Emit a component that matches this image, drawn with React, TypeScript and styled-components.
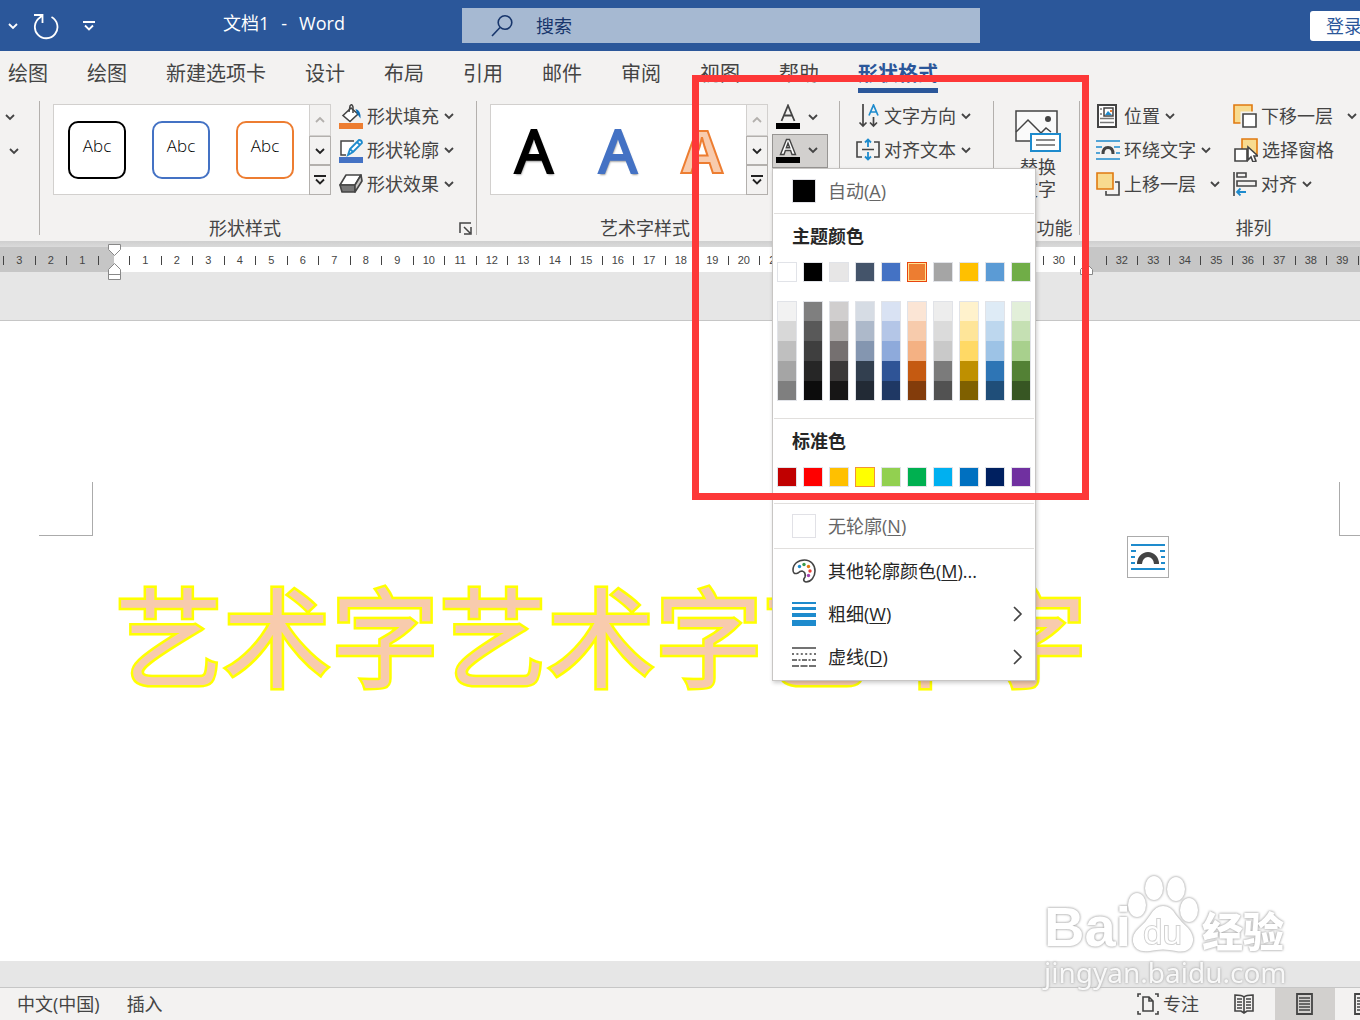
import React from 'react';
import styled, { createGlobalStyle } from 'styled-components';

const Global = createGlobalStyle`
  *, *::before, *::after { box-sizing: border-box; }
  body { margin: 0; background: #f3f2f1; overflow: hidden; }
  button, input { font: inherit; color: inherit; margin: 0; padding: 0; border: 0; background: none; }
  p, h2, ul { margin: 0; padding: 0; font: inherit; list-style: none; }
  svg { flex: none; }
`;

const Shell = styled.div`
  position: relative;
  display: flex;
  flex-direction: column;
  height: 100vh;
  overflow: hidden;
  color: #444;
  font: 18px/24px "Open Sans", "Noto Sans CJK SC", sans-serif;
  white-space: nowrap;
`;

/* ---------- title bar ---------- */
const TitleBar = styled.header`
  display: flex;
  align-items: center;
  flex: none;
  height: 51px;
  background: #2b579a;
  color: #fff;
  overflow: hidden;
`;
const QuickAccess = styled.div`
  display: flex;
  align-items: center;
  gap: 12px;
  flex: 0 0 223px;
  padding-left: 6px;
`;
const IconButton = styled.button<{ $w?: number }>`
  display: flex;
  align-items: center;
  justify-content: center;
  flex: none;
  width: ${(p) => p.$w ?? 14}px;
  height: 32px;
`;
const DocTitle = styled.p`
  display: flex;
  gap: 12px;
  flex: 0 0 239px;
  padding-bottom: 5px;
`;
const Search = styled.label`
  display: flex;
  align-items: center;
  flex: 0 1 518px;
  height: 35px;
  padding-left: 28px;
  gap: 22px;
  background: #a6b9d2;
  color: #17356b;
  input { flex: 1; min-width: 0; outline: 0; }
  input::placeholder { color: #17356b; opacity: 1; }
`;
const SignIn = styled.button`
  flex: none;
  width: 68px;
  height: 30px;
  margin: 0 -18px 0 auto;
  border-radius: 3px;
  background: #fff;
  color: #2b579a;
`;

/* ---------- tabs ---------- */
const Tabs = styled.nav`
  display: flex;
  flex: none;
  gap: 39px;
  height: 50px;
  padding: 6px 8px 0;
  font-size: 20px;
`;
const Tab = styled.button<{ $on?: boolean }>`
  height: 36px;
  padding-top: 2px;
  border-bottom: 5px solid ${(p) => (p.$on ? '#2b579a' : 'transparent')};
  color: ${(p) => (p.$on ? '#2b579a' : '#444')};
  font-weight: ${(p) => (p.$on ? 700 : 400)};
`;

/* ---------- ribbon ---------- */
const Ribbon = styled.div`
  display: flex;
  flex: none;
  height: 140px;
`;
const Group = styled.section<{ $w: number }>`
  display: flex;
  flex-direction: column;
  flex: 0 0 ${(p) => p.$w}px;
  height: 134px;
  border-right: 1px solid #b3b0ad;
`;
const GroupBody = styled.div<{ $pad?: number; $gap?: number }>`
  display: flex;
  align-items: flex-start;
  flex: 1;
  padding-left: ${(p) => p.$pad ?? 0}px;
  gap: ${(p) => p.$gap ?? 0}px;
`;
const GroupFoot = styled.div`
  display: flex;
  align-items: center;
  height: 14px;
  h2 { flex: 1; text-align: center; }
  h2:not(:last-child) { margin-right: 8px; }
  button { margin-right: 4px; }
`;
const Gallery = styled.div`
  display: flex;
  width: 278px;
  height: 91px;
  margin-top: 3px;
  border: 1px solid #d2d0ce;
  background: #fff;
`;
const GalleryItems = styled.div`
  display: grid;
  grid-template-columns: repeat(3, 84px);
  flex: 1;
  align-items: center;
  justify-content: start;
  justify-items: center;
  padding-left: 1px;
`;
const Swatch = styled.button<{ $c: string }>`
  width: 58px;
  height: 58px;
  padding-bottom: 8px;
  border: 2px solid ${(p) => p.$c};
  border-radius: 10px;
  background: #fff;
  color: #000;
  font-size: 17px;
  font-weight: 300;
`;
const ArtLetter = styled.button<{ $c: string; $edge?: string }>`
  color: ${(p) => p.$c};
  font: ${(p) => (p.$edge ? 700 : 400)} 60px/88px "Noto Sans", sans-serif;
  -webkit-text-stroke: 2px ${(p) => p.$edge ?? p.$c};
  text-shadow: ${(p) => (p.$edge ? 'none' : '1px 2px 2px #999')};
`;
const GalleryNav = styled.div`
  display: grid;
  grid-template-rows: 32px 29px 30px;
  width: 22px;
  margin: -1px -1px -1px 0;
`;
const NavButton = styled.button<{ $off?: boolean }>`
  display: flex;
  align-items: center;
  justify-content: center;
  border: 1px solid ${(p) => (p.$off ? '#d2d0ce' : '#b3b0ad')};
  background: #f3f2f1;
  color: ${(p) => (p.$off ? '#b3b0ad' : '#222')};
`;
const Column = styled.div<{ $w?: number; $gap?: number }>`
  display: flex;
  flex-direction: column;
  align-items: flex-start;
  gap: ${(p) => p.$gap ?? 0}px;
  width: ${(p) => (p.$w ? `${p.$w}px` : 'auto')};
`;
const Command = styled.button<{ $gap?: number }>`
  display: flex;
  align-items: center;
  gap: 4px;
  height: 34px;
  padding-bottom: 4px;
  svg:last-child { margin-left: ${(p) => p.$gap ?? 1}px; }
`;
const MenuAnchor = styled.div`
  position: relative;
`;
const ColorButton = styled.button<{ $open?: boolean }>`
  display: flex;
  align-items: center;
  gap: 8px;
  width: 56px;
  height: ${(p) => (p.$open ? 34 : 33)}px;
  padding: 0 0 2px 3px;
  border: 1px solid ${(p) => (p.$open ? '#979593' : 'transparent')};
  background: ${(p) => (p.$open ? '#d2d0ce' : 'none')};
`;
const BigCommand = styled.button`
  display: flex;
  flex-direction: column;
  align-items: center;
  gap: 4px;
  width: 85px;
  padding: 9px 0 0 3px;
  line-height: 22px;
  white-space: pre;
`;

/* ---------- drop-down ---------- */
const Menu = styled.div`
  position: absolute;
  z-index: 3;
  top: 100%;
  left: 0;
  width: 264px;
  padding-bottom: 2px;
  border: 1px solid #c8c6c4;
  background: #fff;
  box-shadow: 1px 2px 4px rgba(0, 0, 0, 0.2);
  color: #262626;
`;
const MenuItem = styled.button<{ $dim?: boolean }>`
  display: flex;
  align-items: center;
  width: 100%;
  height: ${(p) => (p.$dim ? 44 : 43)}px;
  padding: 0 12px 0 19px;
  gap: 12px;
  color: ${(p) => (p.$dim ? '#666' : '#262626')};
  span { flex: 1; text-align: left; }
  u { text-underline-offset: 2px; text-decoration-thickness: 1px; }
`;
const Rule = styled.div`
  height: 1px;
  margin: 0 1px;
  background: #e1dfdd;
`;
const Chip = styled.i<{ $c: string }>`
  width: 24px;
  height: 24px;
  border: 1px solid #e1e1e6;
  background: ${(p) => p.$c};
`;
const MenuHeading = styled.h2`
  padding: 10px 19px 12px;
  font-weight: 700;
`;
const ColorRow = styled.div<{ $bottom: number }>`
  display: grid;
  grid-template-columns: repeat(10, 20px);
  gap: 6px;
  padding: 2px 4px ${(p) => p.$bottom}px;
`;
const ColorCell = styled.button<{ $c: string; $edge?: string; $inner?: string }>`
  height: 20px;
  border: 1px solid ${(p) => p.$edge ?? '#e1e3e8'};
  background: ${(p) => p.$c};
  box-shadow: ${(p) => (p.$inner ? `inset 0 0 0 1px ${p.$inner}` : 'none')};
`;
const ShadeColumn = styled.div`
  display: flex;
  flex-direction: column;
  border: 1px solid #e1e3e8;
`;
const Shade = styled.button<{ $c: string }>`
  height: 20px;
  background: ${(p) => p.$c};
  &:first-child, &:last-child { height: 19px; }
`;

/* ---------- ruler and page ---------- */
const RulerStrip = styled.div`
  position: relative;
  flex: none;
  height: 79px;
  padding-top: 6px;
  background: linear-gradient(#cfcfcf, #dadada 6px, #e6e6e6 6px);
`;
const Ruler = styled.div`
  height: 25px;
  padding-left: 3px;
  overflow: hidden;
  background: linear-gradient(90deg, #c6c6c6 114px, #fff 114px 1086px, #c6c6c6 1086px);
`;
const RulerScale = styled.div`
  display: grid;
  grid-template-columns: repeat(44, 1fr);
  align-items: center;
  width: 1386px;
  height: 26px;
`;
const RulerCell = styled.span`
  height: 9px;
  border-left: 1px solid #444;
  font: 11px/9px "Liberation Sans", sans-serif;
  text-align: center;
`;
const IndentMarker = styled.svg<{ $x: number; $y: number }>`
  position: absolute;
  left: ${(p) => p.$x}px;
  top: ${(p) => p.$y}px;
`;
const Page = styled.main`
  position: relative;
  flex: 1;
  padding-top: 161px;
  border-top: 1px solid #c6c6c6;
  background: #fff;
  overflow: hidden;
`;
const Corners = styled.div`
  display: flex;
  justify-content: space-between;
  padding-left: 39px;
`;
const Corner = styled.i<{ $right?: boolean }>`
  width: ${(p) => (p.$right ? 21 : 54)}px;
  height: 54px;
  border: solid #ababab;
  border-width: ${(p) => (p.$right ? '0 0 1px 1px' : '0 1px 1px 0')};
`;
const WordArt = styled.p`
  padding: 24px 0 0 115px;
  color: #f8cbad;
  font: 400 108px/144px "Noto Sans CJK SC", sans-serif;
  -webkit-text-stroke: 5px #ff0;
  paint-order: stroke fill;
`;
const LayoutButton = styled.button`
  position: absolute;
  top: 215px;
  left: 1127px;
  display: grid;
  place-items: center;
  width: 42px;
  height: 42px;
  border: 1px solid #ababab;
  background: #fff;
`;
const Highlight = styled.div`
  position: absolute;
  z-index: 4;
  top: 75px;
  left: 692px;
  width: 397px;
  height: 425px;
  border: 7px solid #fd3838;
  pointer-events: none;
`;

/* ---------- watermark ---------- */
const Watermark = styled.div`
  position: absolute;
  z-index: 2;
  right: 72px;
  bottom: 31px;
  width: 244px;
  color: #fff;
  filter: drop-shadow(0 0 1px #aaa) drop-shadow(0 0 1px #ccc);
`;
const MarkRow = styled.div`
  display: flex;
  align-items: flex-end;
  height: 84px;
`;
const MarkLatin = styled.span`
  width: 84px;
  font: 700 56px/52px "Liberation Sans", sans-serif;
`;
const MarkPaw = styled.span`
  position: relative;
  width: 74px;
  height: 80px;
  svg { display: block; }
  b {
    position: absolute;
    left: 15px;
    top: 42px;
    font: 400 32px/34px "Open Sans", sans-serif;
    -webkit-text-stroke: 2px #d2d2d2;
    paint-order: stroke fill;
  }
`;
const MarkHan = styled.span`
  font: 900 41px/48px "Noto Sans CJK SC", sans-serif;
`;
const MarkUrl = styled.div`
  margin-top: 2px;
  color: rgba(255, 255, 255, 0.9);
  font: 28px/34px "Noto Sans", sans-serif;
`;

/* ---------- status bar ---------- */
const CanvasFoot = styled.div`
  flex: none;
  height: 27px;
  border-bottom: 1px solid #c6c6c6;
  background: #e6e6e6;
`;
const StatusBar = styled.footer`
  display: flex;
  align-items: center;
  flex: none;
  height: 32px;
  padding-left: 17px;
  overflow: hidden;
`;
const StatusText = styled.button`
  margin-right: 27px;
`;
const Focus = styled.button`
  display: flex;
  align-items: center;
  gap: 4px;
  margin: 0 14px 0 auto;
`;
const ViewButton = styled.button<{ $on?: boolean; $clip?: boolean }>`
  display: flex;
  align-items: center;
  justify-content: ${(p) => (p.$clip ? 'flex-start' : 'center')};
  flex: none;
  width: ${(p) => (p.$clip ? 25 : p.$on ? 60 : 62)}px;
  height: 32px;
  padding-left: ${(p) => (p.$clip ? 19 : 0)}px;
  background: ${(p) => (p.$on ? '#d2d0ce' : 'none')};
`;

/* ---------- icons ---------- */
const Chevron = ({ up }: { up?: boolean }) => (
  <svg width="10" height="8" viewBox="0 0 10 8" fill="none" stroke="currentColor" strokeWidth="1.8">
    <path d={up ? 'M1 6l4-4 4 4' : 'M1 2l4 4 4-4'} />
  </svg>
);
const MoreChevron = () => (
  <svg width="12" height="10" viewBox="0 0 12 10" fill="none" stroke="currentColor" strokeWidth="1.8">
    <path d="M0 1h12M2 4.500l4 4 4-4" />
  </svg>
);
const RedoIcon = () => (
  <svg width="26" height="28" viewBox="0 0 26 28" fill="none" stroke="#fff" strokeWidth="1.8">
    <path d="M18.500 5A11.300 11.300 0 1 1 7 5.500L9 3.500M1 3h8.500v8" />
  </svg>
);
const SearchIcon = () => (
  <svg width="24" height="24" viewBox="0 0 24 24" fill="none" stroke="#17356b" strokeWidth="1.600">
    <circle cx="15" cy="8.500" r="6.800" />
    <path d="M10 13.500L2 22" />
  </svg>
);
const FillIcon = () => (
  <svg width="24" height="25" viewBox="0 0 24 25" fill="none">
    <path d="M4 11.500L12 4l7 6-8 7.500z" fill="#fff" stroke="#444" strokeWidth="1.600" />
    <path d="M10 8l1-6q2-3 3 1v6" stroke="#444" strokeWidth="1.500" />
    <path d="M16.500 5q5.500 1 5 9.500l-3.500-5z" fill="#1070b8" />
    <path d="M0 19h24v6H0z" fill="#ed7d31" />
  </svg>
);
const OutlineIcon = () => (
  <svg width="24" height="25" viewBox="0 0 24 25" fill="none">
    <path d="M15 3H2v14h5" fill="#fff" stroke="#444" strokeWidth="1.500" />
    <path d="M9 17l2-6L20 2q3 0 3 3l-9 9zM18 4l3 3M11 11l3 3" fill="#fff" stroke="#1e8bcd" strokeWidth="1.800" />
    <path d="M0 19h24v6H0z" fill="#4472c4" />
  </svg>
);
const EffectIcon = () => (
  <svg width="24" height="20" viewBox="0 0 24 20" stroke="#444" strokeWidth="1.600" strokeLinejoin="round">
    <path d="M7 1h15l-6 10H1z" fill="#fff" />
    <path d="M1 11h15v7H3z" fill="#777" />
    <path d="M22 1l1 6-7 11v-7z" fill="#c8c6c4" />
  </svg>
);
const FontFillIcon = ({ hollow }: { hollow?: boolean }) => (
  <svg width="24" height="25" viewBox="0 0 24 25" fill="none">
    {hollow ? (
      <path
        d="M4.500 16.500L10.500 1.500h3l6 15h-3.500l-1.400-4H9.400l-1.400 4zM10.300 9.800h3.400L12 5z"
        fill="#fff"
        stroke="#444"
        strokeWidth="1.400"
      />
    ) : (
      <path d="M5.500 17L12 1.500 18.500 17M8 11.500h8" stroke="#444" strokeWidth="1.800" />
    )}
    <path d="M0 19h24v6H0z" fill="#000" />
  </svg>
);
const DirectionIcon = () => (
  <svg width="24" height="24" viewBox="0 0 24 24" fill="none" strokeWidth="1.700">
    <path d="M7 0v22M3.500 18.500L7 22l3.500-3.500M17.500 13v9M14 18.500l3.500 3.500 3.500-3.500" stroke="#444" />
    <path d="M13 11.500L17.500 1 22 11.500M14.500 8h6" stroke="#1e8bcd" />
  </svg>
);
const AlignTextIcon = () => (
  <svg width="24" height="24" viewBox="0 0 24 24" fill="none" strokeWidth="1.600">
    <path d="M6 4H1v15h5M18 4h5v15h-5M6 11.500h12" stroke="#444" />
    <path d="M12 9V1.500M9 4.500l3-3 3 3M12 14v7.500M9 18.500l3 3 3-3" stroke="#1e8bcd" strokeWidth="1.800" />
  </svg>
);
const AltTextIcon = () => (
  <svg width="46" height="42" viewBox="0 0 46 42" fill="none" strokeWidth="1.500">
    <path d="M1 1h41v30H1z" fill="#fafafa" stroke="#444" />
    <path d="M1 22l12-12 13 13 5-5 5 4" stroke="#444" />
    <circle cx="33" cy="9" r="3" fill="#444" />
    <path d="M16 24h29v17H16z" fill="#fff" stroke="#1e8bcd" strokeWidth="2" />
    <path d="M21 30h19M21 35h19" stroke="#666" />
  </svg>
);
const PositionIcon = () => (
  <svg width="24" height="24" viewBox="0 0 24 24" fill="none" strokeWidth="1.500">
    <path d="M2 1h18v22H2z" fill="#fff" stroke="#444" strokeWidth="2" />
    <path d="M8 4h9v8H8z" stroke="#444" />
    <path d="M9 11l3-4 4 4z" fill="#1e8bcd" />
    <path d="M14 6h2v2h-2z" fill="#ed7d31" />
    <path d="M4 5h2M4 10h2M4 14.500h14M4 18.500h14" stroke="#777" />
  </svg>
);
const WrapIcon = () => (
  <svg width="24" height="20" viewBox="0 0 24 20" fill="none" strokeWidth="1.600">
    <path d="M0 1h24M0 7h6M18 7h6M0 13h4M20 13h4M0 19h24" stroke="#1e8bcd" />
    <path d="M7 14q0-6.500 5-6.500t5 6.500" stroke="#444" strokeWidth="3" />
  </svg>
);
const LayoutOptionsIcon = () => (
  <svg width="34" height="26" viewBox="0 0 34 26" fill="none" strokeWidth="1.800">
    <path d="M0 1h34M0 7h5M29 7h5M0 13h4M30 13h4M0 19h4M30 19h4M0 25h34" stroke="#1e8bcd" />
    <path d="M8.500 20a8.500 9.500 0 0 1 17 0" stroke="#444" strokeWidth="5" />
  </svg>
);
const ForwardIcon = () => (
  <svg width="24" height="24" viewBox="0 0 24 24" fill="none">
    <path d="M19 10h4v13H10v-4" stroke="#444" strokeWidth="1.600" />
    <path d="M1 1h16v16H1z" fill="#f8db8f" stroke="#e07a10" strokeWidth="1.600" />
  </svg>
);
const BackwardIcon = () => (
  <svg width="24" height="24" viewBox="0 0 24 24" fill="none">
    <path d="M1 1h18v18H1z" fill="#f8db8f" stroke="#e07a10" strokeWidth="1.600" />
    <path d="M7.500 7.500H24V24H7.500z" fill="#f3f2f1" />
    <path d="M10 10h13v13H10z" fill="#fff" stroke="#444" strokeWidth="1.600" />
  </svg>
);
const SelectionIcon = () => (
  <svg width="24" height="24" viewBox="0 0 24 24" fill="none">
    <path d="M8 1h15v15H8z" fill="#f8db8f" stroke="#e07a10" strokeWidth="1.600" />
    <path d="M1 11h12v12H1z" fill="#fff" stroke="#444" strokeWidth="1.600" />
    <path d="M14 9v13l3-3 2 5 3-1-2-5h4z" fill="#fff" stroke="#444" strokeWidth="1.600" />
  </svg>
);
const AlignIcon = () => (
  <svg width="24" height="24" viewBox="0 0 24 24" fill="none" strokeWidth="1.600">
    <path d="M1 0v24M4 1h9v4H4zM4 9h19v5H4z" stroke="#444" />
    <path d="M13 20H4M7.500 16.500L4 20l3.500 3.500" stroke="#1e8bcd" strokeWidth="1.800" />
  </svg>
);
const LauncherIcon = () => (
  <svg width="13" height="13" viewBox="0 0 13 13" fill="none" stroke="#444" strokeWidth="1.500">
    <path d="M1 11V1h11M5 5l6 6M12 5v7H5" />
  </svg>
);
const PaletteIcon = () => (
  <svg width="24" height="24" viewBox="0 0 24 24" fill="none">
    <path
      d="M1 11C1 5 6 1 12.500 1S23 6 23 12s-4 11-9 11q-4-1-1-5 1-5-3-6-2 0-4 2-5 2-5-3z"
      stroke="#444"
      strokeWidth="1.600"
    />
    <circle cx="7.500" cy="7.500" r="1.700" fill="#1e8bcd" />
    <circle cx="12" cy="5.500" r="1.700" fill="#3a9b4a" />
    <circle cx="16.500" cy="7.500" r="1.700" fill="#e07a10" />
    <circle cx="18" cy="12" r="1.700" fill="#e8403a" />
    <circle cx="16.500" cy="16.500" r="1.700" fill="#a040b0" />
  </svg>
);
const WeightIcon = () => (
  <svg width="24" height="24" viewBox="0 0 24 24" fill="#1e8bcd">
    <path d="M0 0h24v2H0zM0 5h24v3H0zM0 11h24v4H0zM0 18h24v6H0z" />
  </svg>
);
const DashIcon = () => (
  <svg width="24" height="20" viewBox="0 0 24 20" stroke="#444" strokeWidth="1.500">
    <path d="M0 1h24" />
    <path d="M0 7h24" strokeDasharray="2 2.400" />
    <path d="M0 13h24" strokeDasharray="5 1.500 2 1.500" />
    <path d="M0 19h24" strokeDasharray="7 1.500" />
  </svg>
);
const SubArrow = () => (
  <svg width="10" height="16" viewBox="0 0 10 16" fill="none" stroke="#444" strokeWidth="1.600">
    <path d="M1 1l7 7-7 7" />
  </svg>
);
const FocusIcon = () => (
  <svg width="22" height="22" viewBox="0 0 22 22" fill="none" stroke="#444" strokeWidth="1.600">
    <path d="M4 1H1v3M18 1h3v3M4 21H1v-3M18 21h3v-3M6 4h6l4 4v10H6zM12 4v4h4" />
  </svg>
);
const BookIcon = () => (
  <svg width="20" height="20" viewBox="0 0 20 20" fill="none" stroke="#444" strokeWidth="1.600">
    <path d="M10 3Q8 1 1 1v16h6l3 2 3-2h6V1q-7 0-9 2v15" />
    <path d="M3 5h5M3 8h5M3 11h5M3 14h5M12 5h5M12 8h5M12 11h5M12 14h5" strokeWidth="1.300" />
  </svg>
);
const PrintIcon = () => (
  <svg width="18" height="22" viewBox="0 0 18 22" fill="none" stroke="#444">
    <path d="M1 1h15v20H1z" strokeWidth="1.800" />
    <path d="M3 5h11M3 8h11M3 11h11M3 14h11M3 17h11" strokeWidth="1.400" />
  </svg>
);

/* ---------- data ---------- */
const tabs = ['绘图', '绘图', '新建选项卡', '设计', '布局', '引用', '邮件', '审阅', '视图', '帮助', '形状格式'];
const themeColors = ['#ffffff', '#000000', '#e7e6e6', '#44546a', '#4472c4', '#ed7d31', '#a5a5a5', '#ffc000', '#5b9bd5', '#70ad47'];
const shades = [
  ['#f2f2f2', '#d8d8d8', '#bfbfbf', '#a5a5a5', '#7f7f7f'],
  ['#7f7f7f', '#595959', '#3f3f3f', '#262626', '#0c0c0c'],
  ['#d0cece', '#aeabaa', '#757070', '#3a3838', '#171616'],
  ['#d6dce4', '#adb9ca', '#8496b0', '#323f4f', '#222a35'],
  ['#d9e2f3', '#b4c6e7', '#8eaadb', '#2f5496', '#1f3864'],
  ['#fbe5d5', '#f7cbac', '#f4b183', '#c55a11', '#833c0b'],
  ['#ededed', '#dbdbdb', '#c9c9c9', '#7b7b7b', '#525252'],
  ['#fff2cc', '#fee599', '#ffd965', '#bf9000', '#7f6000'],
  ['#deebf6', '#bdd7ee', '#9dc3e6', '#2e75b5', '#1f4e79'],
  ['#e2efd9', '#c5e0b3', '#a8d08d', '#538135', '#375623'],
];
const standardColors = ['#c00000', '#ff0000', '#ffc000', '#ffff00', '#92d050', '#00b050', '#00b0f0', '#0070c0', '#002060', '#7030a0'];
const marks = Array.from({ length: 44 }, (_, i) => i - 3);

const GalleryScroll = () => (
  <GalleryNav>
    <NavButton $off aria-label="上一行"><Chevron up /></NavButton>
    <NavButton aria-label="下一行"><Chevron /></NavButton>
    <NavButton aria-label="其他"><MoreChevron /></NavButton>
  </GalleryNav>
);

const OutlineMenu = () => (
  <Menu>
    <MenuItem $dim><Chip $c="#000" /><span>自动(<u>A</u>)</span></MenuItem>
    <Rule />
    <MenuHeading>主题颜色</MenuHeading>
    <ColorRow $bottom={17}>
      {themeColors.map((c, i) => (
        <ColorCell key={c} $c={c} aria-label={c} $edge={i === 5 ? '#e8450e' : undefined} $inner={i === 5 ? '#ffe294' : undefined} />
      ))}
    </ColorRow>
    <ColorRow $bottom={17}>
      {shades.map((col) => (
        <ShadeColumn key={col[4]}>
          {col.map((c) => <Shade key={c} $c={c} aria-label={c} />)}
        </ShadeColumn>
      ))}
    </ColorRow>
    <Rule />
    <MenuHeading>标准色</MenuHeading>
    <ColorRow $bottom={16}>
      {standardColors.map((c, i) => (
        <ColorCell key={c} $c={c} aria-label={c} $edge={i === 3 ? '#f29436' : undefined} />
      ))}
    </ColorRow>
    <Rule />
    <MenuItem $dim><Chip $c="#fff" /><span>无轮廓(<u>N</u>)</span></MenuItem>
    <Rule />
    <MenuItem><PaletteIcon /><span>其他轮廓颜色(<u>M</u>)...</span></MenuItem>
    <MenuItem><WeightIcon /><span>粗细(<u>W</u>)</span><SubArrow /></MenuItem>
    <MenuItem><DashIcon /><span>虚线(<u>D</u>)</span><SubArrow /></MenuItem>
  </Menu>
);

export default function App() {
  return (
    <Shell>
      <Global />
      <TitleBar>
        <QuickAccess>
          <IconButton aria-label="撤消选项"><Chevron /></IconButton>
          <IconButton $w={28} aria-label="重复"><RedoIcon /></IconButton>
          <IconButton $w={34} aria-label="自定义快速访问工具栏"><MoreChevron /></IconButton>
        </QuickAccess>
        <DocTitle><span>文档1</span><span>-</span><span>Word</span></DocTitle>
        <Search><SearchIcon /><input aria-label="搜索" placeholder="搜索" /></Search>
        <SignIn>登录</SignIn>
      </TitleBar>

      <Tabs>
        {tabs.map((t, i) => <Tab key={i} $on={i === 10}>{t}</Tab>)}
      </Tabs>

      <Ribbon>
        <Group $w={40}>
          <Column $gap={2}>
            <IconButton $w={20} aria-label="编辑形状"><Chevron /></IconButton>
            <IconButton $w={28} aria-label="文本框"><Chevron /></IconButton>
          </Column>
        </Group>
        <Group $w={437}>
          <GroupBody $pad={13} $gap={8}>
            <Gallery>
              <GalleryItems>
                <Swatch $c="#000">Abc</Swatch>
                <Swatch $c="#4472c4">Abc</Swatch>
                <Swatch $c="#ed7d31">Abc</Swatch>
              </GalleryItems>
              <GalleryScroll />
            </Gallery>
            <Column>
              <Command><FillIcon />形状填充<Chevron /></Command>
              <Command><OutlineIcon />形状轮廓<Chevron /></Command>
              <Command><EffectIcon />形状效果<Chevron /></Command>
            </Column>
          </GroupBody>
          <GroupFoot>
            <h2>形状样式</h2>
            <IconButton aria-label="设置形状格式"><LauncherIcon /></IconButton>
          </GroupFoot>
        </Group>
        <Group $w={363}>
          <GroupBody $pad={13} $gap={4}>
            <Gallery>
              <GalleryItems>
                <ArtLetter $c="#000">A</ArtLetter>
                <ArtLetter $c="#4472c4">A</ArtLetter>
                <ArtLetter $c="#f8cbad" $edge="#ed7d31">A</ArtLetter>
              </GalleryItems>
              <GalleryScroll />
            </Gallery>
            <Column>
              <ColorButton aria-label="文本填充"><FontFillIcon /><Chevron /></ColorButton>
              <MenuAnchor>
                <ColorButton $open aria-label="文本轮廓"><FontFillIcon hollow /><Chevron /></ColorButton>
                <OutlineMenu />
              </MenuAnchor>
            </Column>
          </GroupBody>
          <GroupFoot>
            <h2>艺术字样式</h2>
            <IconButton aria-label="设置文本效果格式"><LauncherIcon /></IconButton>
          </GroupFoot>
        </Group>
        <Group $w={154}>
          <GroupBody $pad={16}>
            <Column>
              <Command><DirectionIcon />文字方向<Chevron /></Command>
              <Command><AlignTextIcon />对齐文本<Chevron /></Command>
            </Column>
          </GroupBody>
          <GroupFoot><h2>文本</h2></GroupFoot>
        </Group>
        <Group $w={86}>
          <GroupBody>
            <BigCommand><AltTextIcon />{'替换\n文字'}</BigCommand>
          </GroupBody>
          <GroupFoot><h2>辅助功能</h2></GroupFoot>
        </Group>
        <Group $w={348}>
          <GroupBody $pad={16}>
            <Column $w={137}>
              <Command><PositionIcon />位置<Chevron /></Command>
              <Command><WrapIcon />环绕文字<Chevron /></Command>
              <Command $gap={10}><ForwardIcon />上移一层<Chevron /></Command>
            </Column>
            <Column>
              <Command $gap={10}><BackwardIcon />下移一层<Chevron /></Command>
              <Command><SelectionIcon />选择窗格</Command>
              <Command><AlignIcon />对齐<Chevron /></Command>
            </Column>
          </GroupBody>
          <GroupFoot><h2>排列</h2></GroupFoot>
        </Group>
      </Ribbon>

      <RulerStrip>
        <Ruler>
          <RulerScale>
            {marks.map((n) => <RulerCell key={n}>{n === 0 || n === 31 ? '' : Math.abs(n)}</RulerCell>)}
          </RulerScale>
        </Ruler>
        <IndentMarker $x={108} $y={3} width="13" height="37" viewBox="0 0 13 37" fill="#fff" stroke="#888">
          <path d="M.5.5h12v5l-6 6-6-6zM6.500 19.500l6 6v10H.5v-10zM.5 30.500h12" />
        </IndentMarker>
        <IndentMarker $x={1080} $y={22} width="13" height="12" viewBox="0 0 13 12" fill="#fff" stroke="#888">
          <path d="M6.500.5l6 6v5H.5v-5z" />
        </IndentMarker>
      </RulerStrip>

      <Page>
        <Corners><Corner /><Corner $right /></Corners>
        <WordArt>艺术字艺术字艺术字</WordArt>
        <LayoutButton aria-label="布局选项"><LayoutOptionsIcon /></LayoutButton>
      </Page>
      <CanvasFoot />
      <StatusBar>
        <StatusText>中文(中国)</StatusText>
        <StatusText>插入</StatusText>
        <Focus><FocusIcon />专注</Focus>
        <ViewButton aria-label="阅读视图"><BookIcon /></ViewButton>
        <ViewButton $on aria-label="页面视图"><PrintIcon /></ViewButton>
        <ViewButton $clip aria-label="Web 版式视图"><PrintIcon /></ViewButton>
      </StatusBar>

      <Highlight />
      <Watermark>
        <MarkRow>
          <MarkLatin>Bai</MarkLatin>
          <MarkPaw>
            <svg width="74" height="80" viewBox="0 0 74 80" fill="#fff">
              <ellipse cx="9" cy="32" rx="9" ry="12" />
              <ellipse cx="26" cy="15" rx="9" ry="12" />
              <ellipse cx="48" cy="16" rx="9" ry="12" />
              <ellipse cx="61" cy="37" rx="9" ry="12" />
              <path d="M35 33q8 0 13 9 6 8 12 13 9 11 2 20-5 5-14 3-13-3-26 0-15 2-17-9-1-8 6-14 7-6 12-14 5-8 12-8z" />
            </svg>
            <b>du</b>
          </MarkPaw>
          <MarkHan>经验</MarkHan>
        </MarkRow>
        <MarkUrl>jingyan.baidu.com</MarkUrl>
      </Watermark>
    </Shell>
  );
}
